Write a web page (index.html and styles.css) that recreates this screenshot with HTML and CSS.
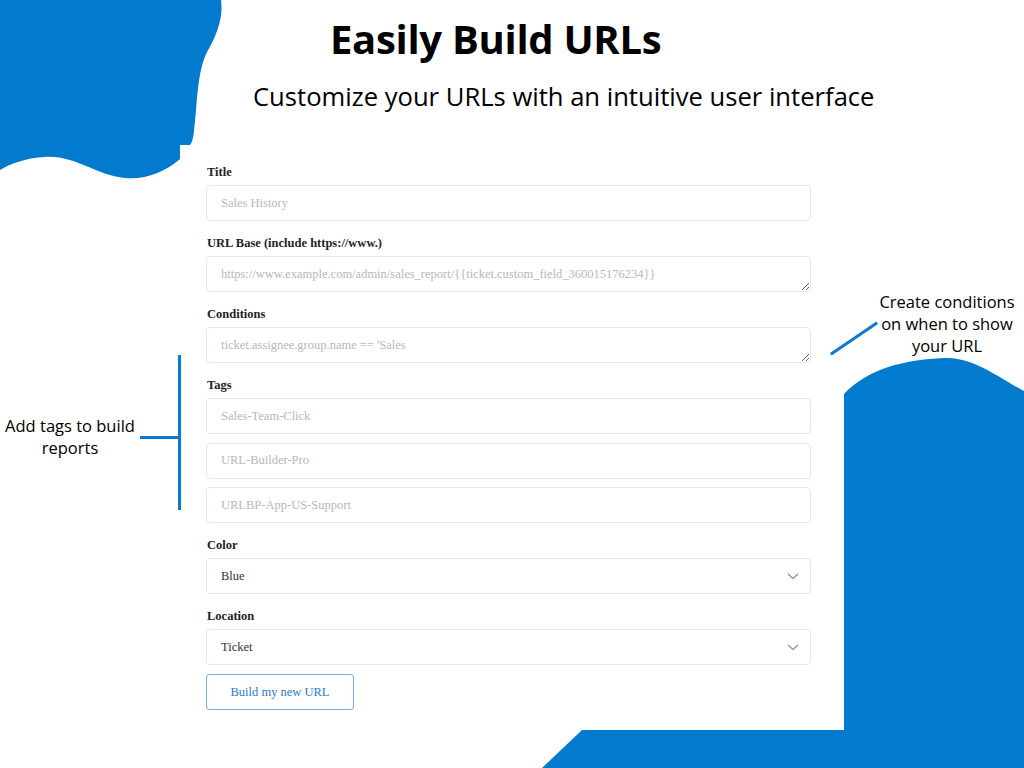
FILE: index.html
```html
<!DOCTYPE html>
<html lang="en">
<head>
<meta charset="utf-8">
<title>Easily Build URLs</title>
<link rel="stylesheet" href="styles.css">
</head>
<body>
<div class="page">
  <svg class="blob-tl" width="230" height="185" viewBox="0 0 230 185">
    <path d="M0 0 L221 0 C224 20 214 40 207 52 C200 66 198 85 196 110 C194 130 194 140 190 145 L180 145 L180 159 C165 172 145 180 125 178 C95 175 75 155 45 157 C25 158 10 164 0 170 Z" fill="#027ACD"/>
  </svg>
  <svg class="blob-br" width="180" height="410" viewBox="0 0 180 410">
    <path d="M0 36 C25 10 60 2 100 0 C130 -1 155 20 180 33 L180 410 L0 410 Z" fill="#027ACD"/>
  </svg>
  <svg class="band-b" width="482" height="38" viewBox="0 0 482 38">
    <path d="M40 0 L482 0 L482 38 L0 38 Z" fill="#027ACD"/>
  </svg>

  <header class="hero">
    <h1 class="hero-title">Easily Build URLs</h1>
    <p class="hero-sub">Customize your URLs with an intuitive user interface</p>
  </header>

  <form class="builder">
    <div class="field">
      <label class="field-label">Title</label>
      <input class="control" type="text" placeholder="Sales History">
    </div>
    <div class="field">
      <label class="field-label">URL Base (include https://www.)</label>
      <textarea class="control area" placeholder="https://www.example.com/admin/sales_report/{{ticket.custom_field_360015176234}}"></textarea>
    </div>
    <div class="field">
      <label class="field-label">Conditions</label>
      <textarea class="control area" placeholder="ticket.assignee.group.name == 'Sales"></textarea>
    </div>
    <div class="field">
      <label class="field-label">Tags</label>
      <div class="tag-list">
        <input class="control" type="text" placeholder="Sales-Team-Click">
        <input class="control" type="text" placeholder="URL-Builder-Pro">
        <input class="control" type="text" placeholder="URLBP-App-US-Support">
      </div>
    </div>
    <div class="field">
      <label class="field-label">Color</label>
      <div class="select-wrap">
        <select class="control select"><option>Blue</option></select>
        <svg class="chevron" width="12" height="7" viewBox="0 0 12 7"><path d="M1 1 L6 5.5 L11 1" fill="none" stroke="#8a8f96" stroke-width="1.3"/></svg>
      </div>
    </div>
    <div class="field">
      <label class="field-label">Location</label>
      <div class="select-wrap">
        <select class="control select"><option>Ticket</option></select>
        <svg class="chevron" width="12" height="7" viewBox="0 0 12 7"><path d="M1 1 L6 5.5 L11 1" fill="none" stroke="#8a8f96" stroke-width="1.3"/></svg>
      </div>
    </div>
    <button type="button" class="build-btn">Build my new URL</button>
  </form>

  <div class="note note-cond">Create conditions<br>on when to show<br>your URL</div>
  <div class="note note-tags">Add tags to build<br>reports</div>
  <div class="line line-diag"></div>
  <div class="line line-vert"></div>
  <div class="line line-horz"></div>
</div>
</body>
</html>
```
FILE: styles.css
```css
html, body {
  margin: 0;
  padding: 0;
  background: #ffffff;
}
.page {
  position: relative;
  width: 1024px;
  height: 768px;
  overflow: hidden;
  background: #ffffff;
}
.blob-tl {
  position: absolute;
  left: 0;
  top: 0;
}
.blob-br {
  position: absolute;
  left: 844px;
  top: 358px;
}
.band-b {
  position: absolute;
  left: 542px;
  top: 730px;
}
.hero {
  position: relative;
  padding-top: 13px;
  font-family: "Open Sans", "Liberation Sans", sans-serif;
  color: #000;
}
.hero-title {
  margin: 0 0 0 330px;
  font-size: 40px;
  line-height: 52px;
  font-weight: 700;
  letter-spacing: -0.3px;
}
.hero-sub {
  margin: 17px 0 0 253px;
  font-size: 25.6px;
  line-height: 30px;
  font-weight: 400;
}
.builder {
  position: relative;
  margin: 53px 0 0 206px;
  width: 605px;
  display: flex;
  flex-direction: column;
  gap: 15px;
  font-family: "Liberation Serif", "Times New Roman", serif;
}
.field {
  display: flex;
  flex-direction: column;
  gap: 5px;
}
.field-label {
  font-size: 12.5px;
  line-height: 15px;
  font-weight: 700;
  color: #1f2328;
  padding-left: 1px;
}
.control {
  box-sizing: border-box;
  width: 100%;
  height: 36px;
  margin: 0;
  padding: 0 14px;
  border: 1px solid #e6e7e9;
  border-radius: 4px;
  background: #fff;
  font-family: "Liberation Serif", "Times New Roman", serif;
  font-size: 12.5px;
  color: #333;
  outline: none;
}
.control::placeholder {
  color: #b4b8be;
}
.area {
  display: block;
  padding: 9px 14px 0;
  line-height: 16px;
  resize: vertical;
}
.tag-list {
  display: flex;
  flex-direction: column;
  gap: 8.5px;
}
.select-wrap {
  position: relative;
}
.select {
  appearance: none;
  -webkit-appearance: none;
  color: #30343a;
}
.chevron {
  position: absolute;
  right: 12px;
  top: 15px;
  pointer-events: none;
}
.build-btn {
  align-self: flex-start;
  margin-top: -6px;
  box-sizing: border-box;
  width: 148px;
  height: 36px;
  border: 1px solid #78aedf;
  border-radius: 3px;
  background: #fff;
  color: #2b7cc5;
  font-family: "Liberation Serif", "Times New Roman", serif;
  font-size: 12.5px;
}
.note {
  position: absolute;
  font-family: "Open Sans", "Liberation Sans", sans-serif;
  font-size: 16.5px;
  line-height: 22px;
  color: #000;
  text-align: center;
}
.note-cond {
  left: 867px;
  top: 291px;
  width: 160px;
}
.note-tags {
  left: -10px;
  top: 415px;
  width: 160px;
}
.line {
  position: absolute;
  background: #0a7ad0;
}
.line-diag {
  left: 826px;
  top: 337px;
  width: 56px;
  height: 3px;
  transform: rotate(-34deg);
}
.line-vert {
  left: 178px;
  top: 355px;
  width: 3px;
  height: 155px;
}
.line-horz {
  left: 140px;
  top: 436px;
  width: 40px;
  height: 3px;
}
```
